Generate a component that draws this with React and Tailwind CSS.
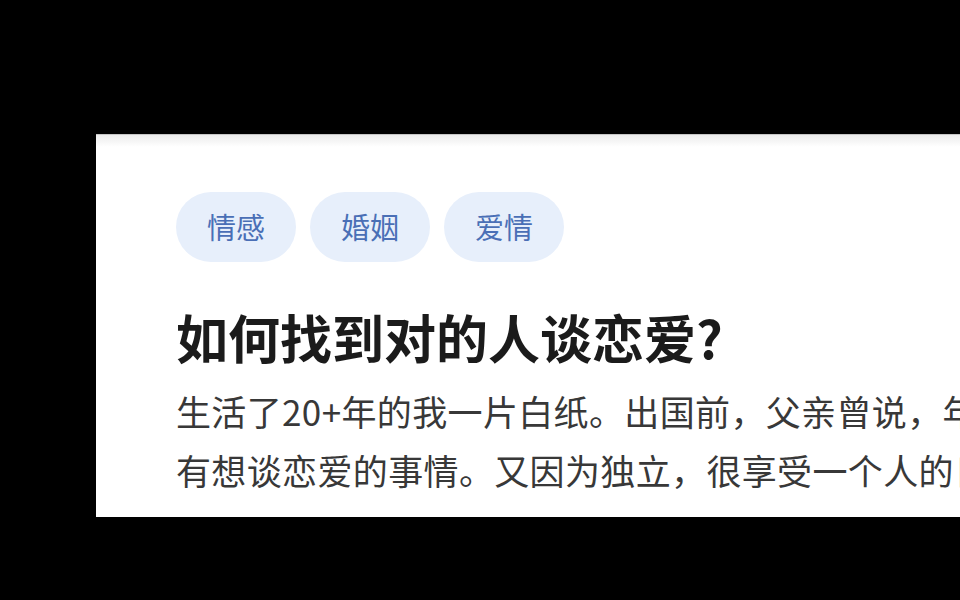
import React from 'react';

const tags = ['情感', '婚姻', '爱情'];

const App = () => {
    return (
        <div
            className="w-[960px] h-[600px] bg-black overflow-hidden pt-[134px] pl-[96px]"
            style={{ fontFamily: '"Noto Sans CJK SC", "Noto Sans", sans-serif' }}
        >
            <div className="w-[900px] h-[383px] bg-white border-t border-[#c6c6c6]">
                {/* soft shadow under the top edge */}
                <div className="h-[12px] bg-gradient-to-b from-[#ececec] to-white" />

                <div className="pl-[80px] pt-[45px]">
                    <div className="flex gap-[14px]">
                        {tags.map((t) => (
                            <span
                                key={t}
                                className="w-[120px] h-[70px] rounded-full bg-[#e7effb] text-[#4a6fb6] text-[29px] flex items-center justify-center"
                            >
                                {t}
                            </span>
                        ))}
                    </div>

                    <h1 className="mt-[44px] text-[52px] leading-[62px] font-bold text-[#1b1b1b] whitespace-nowrap">
                        如何找到对的人谈恋爱?
                    </h1>

                    <div className="mt-[13px] text-[35px] leading-[59px] tracking-[0.36px] text-[#383838] whitespace-nowrap">
                        <p>生活了20+年的我一片白纸。出国前，父亲曾说，年</p>
                        <p>有想谈恋爱的事情。又因为独立，很享受一个人的日子</p>
                    </div>
                </div>
            </div>
        </div>
    );
};

export default App;
